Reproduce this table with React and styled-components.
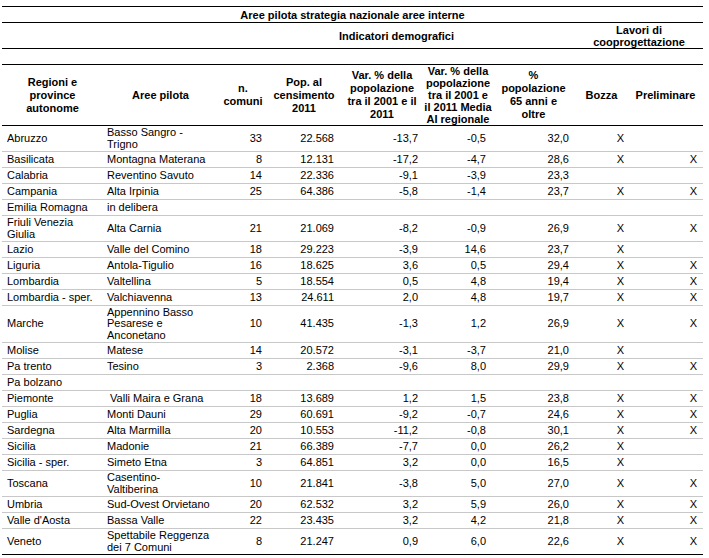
import styled, { createGlobalStyle } from 'styled-components';

const GlobalStyle = createGlobalStyle`
    html, body {
        margin: 0;
        padding: 0;
        background: #ffffff;
    }
    body {
        font-family: "Liberation Sans", Arial, sans-serif;
        color: #000000;
    }
`;

const Page = styled.div`
    padding: 6px 6px 0 2px;
`;

const Table = styled.table`
    width: 701px;
    table-layout: fixed;
    border-collapse: separate;
    border-spacing: 0;
    border-top: 1px solid #000;
    font-size: 11px;
    line-height: 12px;
`;

const HeadCell = styled.th`
    box-sizing: border-box;
    height: ${(p) => p.$h}px;
    padding: 0;
    border-bottom: 1px solid #000;
    font-weight: bold;
    line-height: ${(p) => p.$lh ?? 12}px;
    text-align: center;
    vertical-align: ${(p) => p.$valign || 'middle'};
    white-space: nowrap;
`;

const Cell = styled.td`
    box-sizing: border-box;
    height: ${(p) => p.$h}px;
    padding: 0 ${(p) => p.$pr ?? 6}px 0 ${(p) => p.$pl ?? 5}px;
    border-bottom: 1px solid ${(p) => (p.$last ? '#000' : '#c8c8c8')};
    line-height: 11.6px;
    text-align: ${(p) => p.$align || 'left'};
    vertical-align: middle;
    white-space: nowrap;
`;

const widths = [101, 115, 50, 72, 84, 68, 83, 53, 75];

const rows = [
    ['Abruzzo', 'Basso Sangro -\nTrigno', '33', '22.568', '-13,7', '-0,5', '32,0', 'X', ''],
    ['Basilicata', 'Montagna Materana', '8', '12.131', '-17,2', '-4,7', '28,6', 'X', 'X'],
    ['Calabria', 'Reventino Savuto', '14', '22.336', '-9,1', '-3,9', '23,3', '', ''],
    ['Campania', 'Alta Irpinia', '25', '64.386', '-5,8', '-1,4', '23,7', 'X', 'X'],
    ['Emilia Romagna', 'in delibera', '', '', '', '', '', '', ''],
    ['Friuli Venezia\nGiulia', 'Alta Carnia', '21', '21.069', '-8,2', '-0,9', '26,9', 'X', 'X'],
    ['Lazio', 'Valle del Comino', '18', '29.223', '-3,9', '14,6', '23,7', 'X', ''],
    ['Liguria', 'Antola-Tigulio', '16', '18.625', '3,6', '0,5', '29,4', 'X', 'X'],
    ['Lombardia', 'Valtellina', '5', '18.554', '0,5', '4,8', '19,4', 'X', 'X'],
    ['Lombardia - sper.', 'Valchiavenna', '13', '24.611', '2,0', '4,8', '19,7', 'X', 'X'],
    ['Marche', 'Appennino Basso\nPesarese e\nAnconetano', '10', '41.435', '-1,3', '1,2', '26,9', 'X', 'X'],
    ['Molise', 'Matese', '14', '20.572', '-3,1', '-3,7', '21,0', 'X', ''],
    ['Pa trento', 'Tesino', '3', '2.368', '-9,6', '8,0', '29,9', 'X', 'X'],
    ['Pa bolzano', '', '', '', '', '', '', '', ''],
    ['Piemonte', '\u00a0Valli Maira e Grana', '18', '13.689', '1,2', '1,5', '23,8', 'X', 'X'],
    ['Puglia', 'Monti Dauni', '29', '60.691', '-9,2', '-0,7', '24,6', 'X', 'X'],
    ['Sardegna', 'Alta Marmilla', '20', '10.553', '-11,2', '-0,8', '30,1', 'X', 'X'],
    ['Sicilia', 'Madonie', '21', '66.389', '-7,7', '0,0', '26,2', 'X', ''],
    ['Sicilia - sper.', 'Simeto Etna', '3', '64.851', '3,2', '0,0', '16,5', 'X', ''],
    ['Toscana', 'Casentino-\nValtiberina', '10', '21.841', '-3,8', '5,0', '27,0', 'X', 'X'],
    ['Umbria', 'Sud-Ovest Orvietano', '20', '62.532', '3,2', '5,9', '26,0', 'X', 'X'],
    ["Valle d'Aosta", 'Bassa Valle', '22', '23.435', '3,2', '4,2', '21,8', 'X', 'X'],
    ['Veneto', 'Spettabile Reggenza\ndei 7 Comuni', '8', '21.247', '0,9', '6,0', '22,6', 'X', 'X'],
];

const rowHeight = (row) => {
    const lines = Math.max(...row.map((c) => c.split('\n').length));
    if (lines === 3) return 37;
    if (lines === 2) return 26;
    return 16;
};

const Lines = ({ text }) =>
    text.split('\n').map((t, i) => (
        <span key={i}>
            {i > 0 && <br />}
            {t}
        </span>
    ));

const App = () => {
    return (
        <Page>
            <GlobalStyle />
            <Table>
                <colgroup>
                    {widths.map((w, i) => (
                        <col key={i} style={{ width: w }} />
                    ))}
                </colgroup>
                <thead>
                    <tr>
                        <HeadCell $h={16} colSpan={9}>
                            Aree pilota strategia nazionale aree interne
                        </HeadCell>
                    </tr>
                    <tr>
                        <HeadCell $h={26} colSpan={2} />
                        <HeadCell $h={26} colSpan={5}>
                            Indicatori demografici
                        </HeadCell>
                        <HeadCell $h={26} colSpan={2} $valign="bottom">
                            Lavori di
                            <br />
                            cooprogettazione
                        </HeadCell>
                    </tr>
                    <tr>
                        <HeadCell $h={16} colSpan={9} />
                    </tr>
                    <tr>
                        <HeadCell $h={61} $lh={13}>
                            <Lines text={'Regioni e\nprovince\nautonome'} />
                        </HeadCell>
                        <HeadCell $h={61}>Aree pilota</HeadCell>
                        <HeadCell $h={61} $lh={13}>
                            <Lines text={'n.\ncomuni'} />
                        </HeadCell>
                        <HeadCell $h={61} $lh={13}>
                            <Lines text={'Pop. al\ncensimento\n2011'} />
                        </HeadCell>
                        <HeadCell $h={61} $lh={13}>
                            <Lines text={'Var. % della\npopolazione\ntra il 2001 e il\n2011'} />
                        </HeadCell>
                        <HeadCell $h={61} $lh={12}>
                            <Lines text={'Var. % della\npopolazione\ntra il 2001 e\nil 2011 Media\nAI regionale'} />
                        </HeadCell>
                        <HeadCell $h={61} $lh={13}>
                            <Lines text={'%\npopolazione\n65 anni e\noltre'} />
                        </HeadCell>
                        <HeadCell $h={61}>Bozza</HeadCell>
                        <HeadCell $h={61}>Preliminare</HeadCell>
                    </tr>
                </thead>
                <tbody>
                    {rows.map((row, r) => {
                        const h = rowHeight(row);
                        const last = r === rows.length - 1;
                        return (
                            <tr key={r}>
                                <Cell $h={h} $last={last}>
                                    <Lines text={row[0]} />
                                </Cell>
                                <Cell $h={h} $last={last} $pl={4}>
                                    <Lines text={row[1]} />
                                </Cell>
                                {row.slice(2, 7).map((v, i) => (
                                    <Cell key={i} $h={h} $last={last} $align="right">
                                        {v}
                                    </Cell>
                                ))}
                                <Cell $h={h} $last={last} $align="right" $pr={4}>
                                    {row[7]}
                                </Cell>
                                <Cell $h={h} $last={last} $align="right" $pr={6}>
                                    {row[8]}
                                </Cell>
                            </tr>
                        );
                    })}
                </tbody>
            </Table>
        </Page>
    );
};

export default App;
